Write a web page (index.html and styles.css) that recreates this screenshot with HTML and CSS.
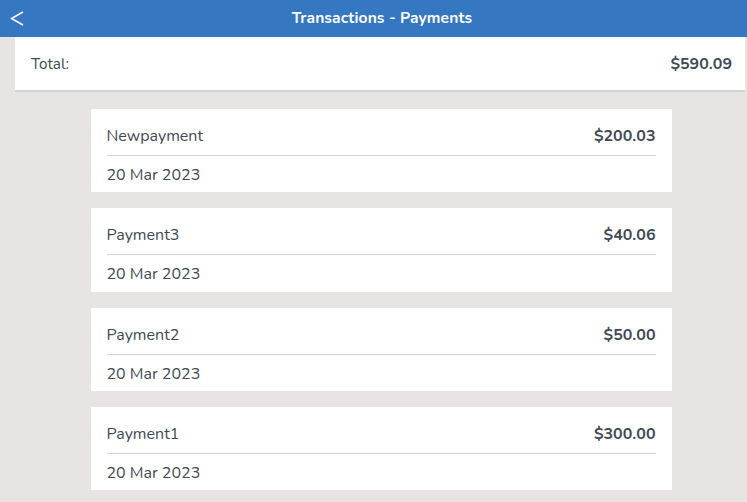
FILE: index.html
```html
<!DOCTYPE html>
<html>
<head>
<meta charset="utf-8">
<link rel="stylesheet" href="styles.css">
</head>
<body>
<header class="topbar">
  <span class="back"><svg width="14" height="15" viewBox="0 0 14 15"><polyline points="13,1 1.5,7.5 13,14" fill="none" stroke="#fff" stroke-width="1.6"/></svg></span>
  <h1 class="title">Transactions - Payments</h1>
</header>
<section class="total">
  <span class="total-label">Total:</span>
  <span class="total-value">$590.09</span>
</section>
<main class="list">
  <div class="card">
    <div class="row top"><span class="name">Newpayment</span><span class="amount">$200.03</span></div>
    <div class="row date">20 Mar 2023</div>
  </div>
  <div class="card">
    <div class="row top"><span class="name">Payment3</span><span class="amount">$40.06</span></div>
    <div class="row date">20 Mar 2023</div>
  </div>
  <div class="card">
    <div class="row top"><span class="name">Payment2</span><span class="amount">$50.00</span></div>
    <div class="row date">20 Mar 2023</div>
  </div>
  <div class="card">
    <div class="row top"><span class="name">Payment1</span><span class="amount">$300.00</span></div>
    <div class="row date">20 Mar 2023</div>
  </div>
</main>
</body>
</html>
```
FILE: styles.css
```css
* { box-sizing: border-box; }
html, body { margin: 0; padding: 0; }
body {
  background: #e8e4e3;
  font-family: "Nunito", "Lato", "Noto Sans", sans-serif;
  color: #404954;
  width: 747px;
  height: 502px;
  overflow: hidden;
}
.topbar {
  height: 37px;
  background: #3577c1;
  display: flex;
  align-items: center;
  position: relative;
}
.back {
  width: 37px;
  padding-left: 10px;
  display: flex;
  align-items: center;
  height: 37px;
}
.title {
  margin: 0;
  flex: 1;
  text-align: center;
  color: #fff;
  font-size: 15.6px;
  font-weight: 700;
  padding-right: 20px;
  padding-bottom: 2px;
  letter-spacing: 0.1px;
}
.total {
  margin: 0 2px 0 15px;
  height: 55px;
  background: #fff;
  border-bottom: 2px solid #d4d3d3;
  display: flex;
  justify-content: space-between;
  align-items: center;
  padding: 1px 13px 0 16px;
  font-size: 15.3px;
}
.total-value { font-weight: 700; font-size: 16px; }
.list {
  display: flex;
  flex-direction: column;
  align-items: center;
  gap: 16px;
  padding-top: 17px;
  padding-left: 15px;
}
.card {
  width: 581px;
  background: #fff;
  padding: 0 16px;
}
.row { font-size: 16px; line-height: 20px; }
.top {
  display: flex;
  justify-content: space-between;
  padding: 17px 0 9px;
  border-bottom: 1px solid #d2d2d2;
}
.amount { font-weight: 700; font-size: 16px; }
.date { padding: 9px 0 7.33px; }
```
